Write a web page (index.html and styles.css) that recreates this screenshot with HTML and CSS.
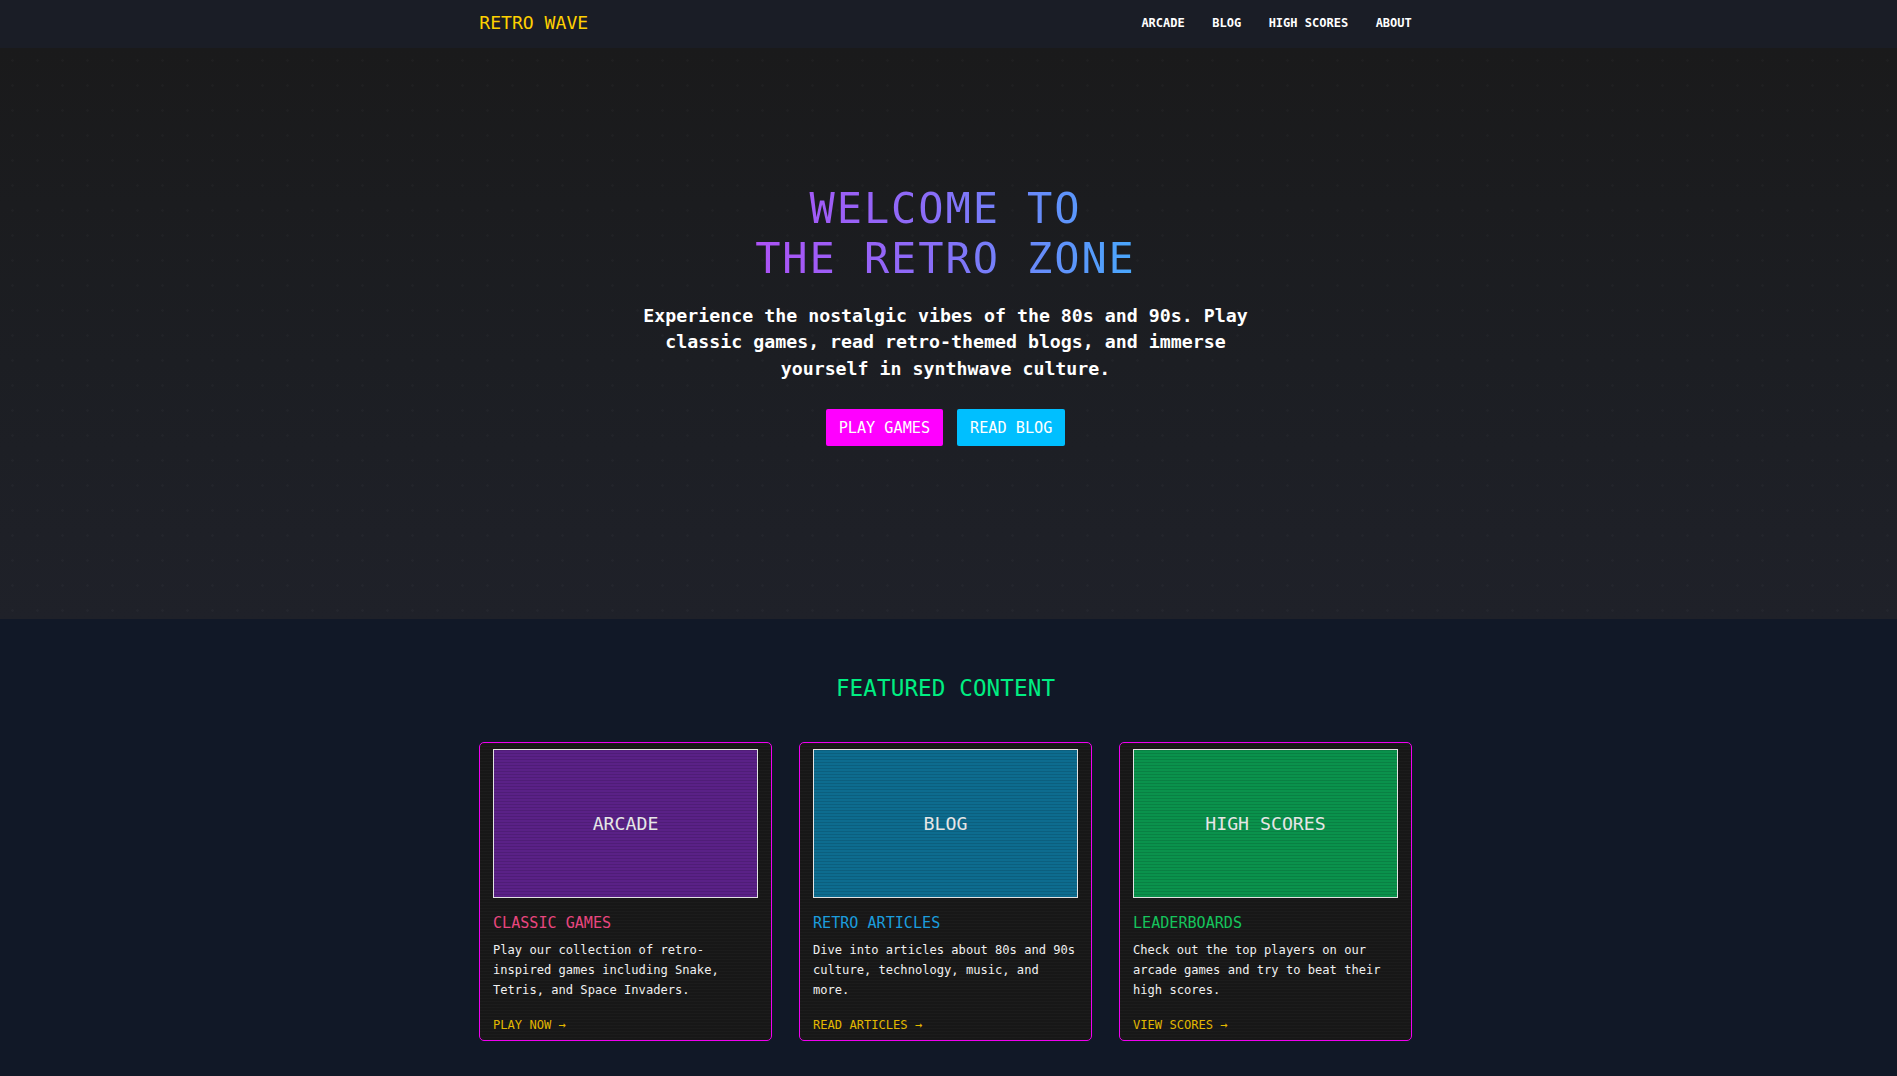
FILE: index.html
```html
<!DOCTYPE html>
<html lang="en">
<head>
<meta charset="utf-8">
<title>Retro Wave</title>
<link rel="stylesheet" href="styles.css">
</head>
<body>
<header class="nav">
  <div class="container nav-inner">
    <a class="logo" href="#">RETRO WAVE</a>
    <nav class="nav-links">
      <a href="#">ARCADE</a>
      <a href="#">BLOG</a>
      <a href="#">HIGH SCORES</a>
      <a href="#">ABOUT</a>
    </nav>
  </div>
</header>

<section class="hero">
  <div class="container hero-inner">
    <h1 class="hero-title">WELCOME TO<br>THE RETRO ZONE</h1>
    <p class="hero-text">Experience the nostalgic vibes of the 80s and 90s. Play classic games, read retro-themed blogs, and immerse yourself in synthwave culture.</p>
    <div class="hero-actions">
      <a class="btn btn-pink" href="#">PLAY GAMES</a>
      <a class="btn btn-cyan" href="#">READ BLOG</a>
    </div>
  </div>
</section>

<section class="featured">
  <div class="container">
    <h2 class="featured-title">FEATURED CONTENT</h2>
    <div class="cards">
      <article class="card">
        <div class="card-img img-purple"><span>ARCADE</span></div>
        <h3 class="card-title t-pink">CLASSIC GAMES</h3>
        <p class="card-text">Play our collection of retro-inspired games including Snake, Tetris, and Space Invaders.</p>
        <a class="card-link" href="#">PLAY NOW →</a>
      </article>
      <article class="card">
        <div class="card-img img-blue"><span>BLOG</span></div>
        <h3 class="card-title t-blue">RETRO ARTICLES</h3>
        <p class="card-text">Dive into articles about 80s and 90s culture, technology, music, and more.</p>
        <a class="card-link" href="#">READ ARTICLES →</a>
      </article>
      <article class="card">
        <div class="card-img img-green"><span>HIGH SCORES</span></div>
        <h3 class="card-title t-green">LEADERBOARDS</h3>
        <p class="card-text">Check out the top players on our arcade games and try to beat their high scores.</p>
        <a class="card-link" href="#">VIEW SCORES →</a>
      </article>
    </div>
  </div>
</section>
</body>
</html>
```

FILE: styles.css
```css
* { box-sizing: border-box; }

html, body {
  margin: 0;
  padding: 0;
  background: #111827;
}

body {
  font-family: "DejaVu Sans Mono", "Liberation Mono", monospace;
  color: #ffffff;
}

a { text-decoration: none; color: inherit; }

.container {
  width: 932.5px;
  margin: 0 auto;
}

/* NAV */
.nav {
  background: #1a1d26;
  height: 48px;
  padding-right: 6px;
}

.nav-inner {
  height: 100%;
  display: flex;
  align-items: center;
  justify-content: space-between;
  padding-bottom: 3px;
}

.logo {
  color: #ffd000;
  font-size: 18.1px;
  line-height: 22px;
}

.nav-links {
  display: flex;
  gap: 27.5px;
}

.nav-links a {
  font-size: 12px;
  font-weight: bold;
  color: #ffffff;
  line-height: 16px;
}

/* HERO */
.hero {
  padding: 135.5px 6px 173px 0;
  background:
    radial-gradient(circle, rgba(255,255,255,0.022) 1px, transparent 1.5px) 0 0 / 25px 25px,
    linear-gradient(180deg, #1a1a1b 0%, #1c1e23 55%, #1f2129 100%);
}

.hero-inner {
  display: flex;
  flex-direction: column;
  align-items: center;
  text-align: center;
}

.hero-title {
  margin: 0;
  font-size: 42px;
  line-height: 50px;
  font-weight: normal;
  letter-spacing: 1.9px;
  background: linear-gradient(90deg, #ad52f6 0%, #8b6cf8 45%, #48a8fd 100%);
  -webkit-background-clip: text;
  background-clip: text;
  color: transparent;
}

.hero-text {
  margin: 19px 0 0;
  max-width: 640px;
  font-size: 18.25px;
  line-height: 26.5px;
  font-weight: bold;
  color: #ffffff;
}

.hero-actions {
  margin-top: 27px;
  display: flex;
  gap: 14px;
}

.btn {
  display: flex;
  align-items: center;
  height: 37px;
  padding: 0 13px;
  font-size: 15.2px;
  color: #ffffff;
  border-radius: 2px;
}

.btn-pink { background: #ff00ff; }
.btn-cyan { background: #00bfff; }

/* FEATURED */
.featured {
  background: #111827;
  padding: 55px 6px 60px 0;
}

.featured-title {
  margin: 0;
  text-align: center;
  font-size: 22.6px;
  line-height: 28px;
  font-weight: normal;
  color: #00ee82;
  letter-spacing: 0.1px;
}

.cards {
  margin-top: 40px;
  display: grid;
  grid-template-columns: repeat(3, 1fr);
  gap: 27.5px;
}

.card {
  border: 1px solid #f000f0;
  border-radius: 5px;
  padding: 6px 12.75px 5px;
  background:
    repeating-linear-gradient(180deg, rgba(255,255,255,0.018) 0 1px, transparent 1px 3px),
    #171717;
  display: flex;
  flex-direction: column;
}

.card-img {
  height: 149px;
  border: 1px solid #e2e2e2;
  display: flex;
  align-items: center;
  justify-content: center;
  font-size: 18.2px;
  color: #e6e6e6;
}

.card-img span { line-height: 22px; }

.img-purple {
  background:
    repeating-linear-gradient(180deg, rgba(0,0,0,0.12) 0 1px, transparent 1px 3px),
    #5a2187;
}
.img-blue {
  background:
    repeating-linear-gradient(180deg, rgba(0,0,0,0.12) 0 1px, transparent 1px 3px),
    #0d6c8f;
}
.img-green {
  background:
    repeating-linear-gradient(180deg, rgba(0,0,0,0.12) 0 1px, transparent 1px 3px),
    #0a924c;
}

.card-title {
  margin: 15px 0 0;
  font-size: 15.1px;
  line-height: 20px;
  font-weight: normal;
}

.t-pink { color: #e8467f; }
.t-blue { color: #1b9ddd; }
.t-green { color: #15c45c; }

.card-text {
  margin: 7.4px 0 0;
  font-size: 12.1px;
  line-height: 20px;
  color: #f0f0f0;
}

.card-link {
  margin-top: 14.3px;
  font-size: 12.1px;
  line-height: 20px;
  color: #e2b800;
}
```
